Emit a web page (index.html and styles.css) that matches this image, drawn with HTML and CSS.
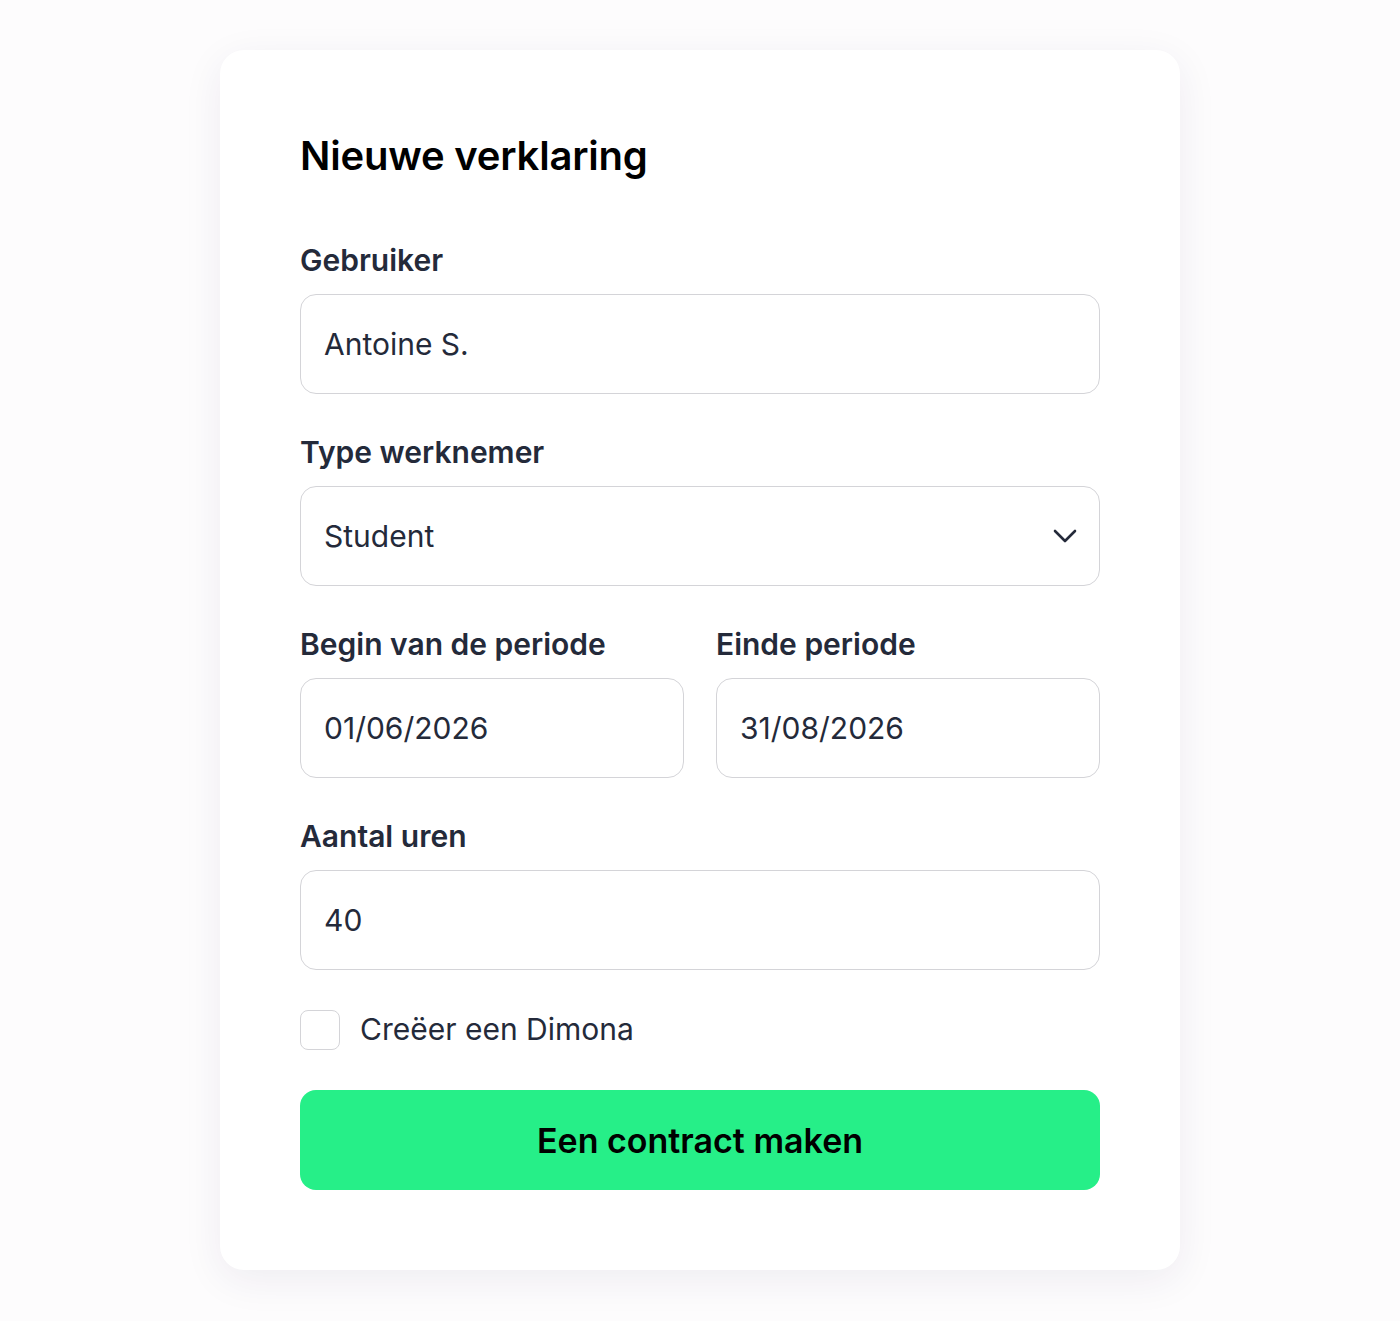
FILE: index.html
```html
<!DOCTYPE html>
<html lang="nl">
<head>
<meta charset="utf-8">
<title>Nieuwe verklaring</title>
<link rel="stylesheet" href="styles.css">
</head>
<body>
<main class="page">
  <form class="card">
    <h1 class="title">Nieuwe verklaring</h1>
    <div class="field">
      <label class="label">Gebruiker</label>
      <div class="input">Antoine S.</div>
    </div>
    <div class="field">
      <label class="label">Type werknemer</label>
      <div class="input select">
        <span>Student</span>
        <svg class="chevron" width="24" height="14" viewBox="0 0 24 14" fill="none"><path d="M2 2l10 10L22 2" stroke="#242a3a" stroke-width="2.6" stroke-linecap="round" stroke-linejoin="round"/></svg>
      </div>
    </div>
    <div class="row">
      <div class="field">
        <label class="label">Begin van de periode</label>
        <div class="input">01/06/2026</div>
      </div>
      <div class="field">
        <label class="label">Einde periode</label>
        <div class="input">31/08/2026</div>
      </div>
    </div>
    <div class="field">
      <label class="label">Aantal uren</label>
      <div class="input">40</div>
    </div>
    <div class="check">
      <span class="box"></span>
      <span class="check-label">Creëer een Dimona</span>
    </div>
    <button type="button" class="btn">Een contract maken</button>
  </form>
</main>
</body>
</html>
```
FILE: styles.css
```css
* { box-sizing: border-box; }
html, body { margin: 0; padding: 0; }
body {
  background: #fdfcfd;
  font-family: Inter, "Noto Sans", sans-serif;
  color: #242a3a;
}
.page {
  display: flex;
  justify-content: center;
  padding: 50px 0 51px;
}
.card {
  width: 960px;
  background: #ffffff;
  border-radius: 24px;
  box-shadow: 0 10px 40px rgba(40, 30, 80, 0.07);
  padding: 78px 80px 80px;
  display: flex;
  flex-direction: column;
}
.title {
  margin: 0 0 58px;
  font-size: 40px;
  line-height: 56px;
  font-weight: 600;
  color: #000;
  letter-spacing: -0.2px;
}
.field {
  display: flex;
  flex-direction: column;
  gap: 16px;
  margin-bottom: 40px;
}
.label {
  font-size: 30px;
  line-height: 36px;
  font-weight: 600;
  color: #242a3a;
}
.input {
  height: 100px;
  border: 1.5px solid #d4d4d8;
  border-radius: 16px;
  padding: 0 22px 0 23px;
  display: flex;
  align-items: center;
  font-size: 30px;
  color: #242a3a;
  background: #fff;
}
.select { justify-content: space-between; }
.chevron { display: block; }
.row {
  display: grid;
  grid-template-columns: 1fr 1fr;
  column-gap: 32px;
}
.check {
  display: flex;
  align-items: center;
  gap: 20px;
  margin-bottom: 40px;
}
.box {
  width: 40px;
  height: 40px;
  border: 1.5px solid #d4d4d8;
  border-radius: 8px;
  background: #fff;
}
.check-label {
  font-size: 30px;
  line-height: 36px;
  color: #242a3a;
  margin-top: -3px;
}
.btn {
  height: 100px;
  border: none;
  border-radius: 16px;
  background: #26ef88;
  color: #000;
  font-family: Inter, "Noto Sans", sans-serif;
  font-size: 34px;
  font-weight: 600;
  cursor: pointer;
}
```
